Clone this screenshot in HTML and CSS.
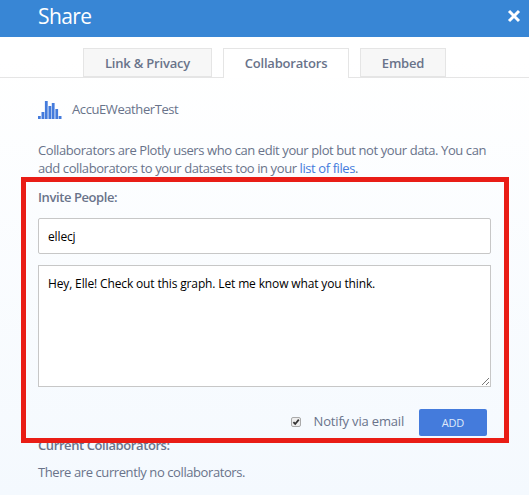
FILE: index.html
```
<!DOCTYPE html>
<html lang="en">
<head>
<meta charset="utf-8">
<title>Share</title>
<link rel="stylesheet" href="styles.css">
</head>
<body>
<header class="header">
  <h1 class="title">Share</h1>
  <button class="close" aria-label="Close"><svg width="14" height="14" viewBox="0 0 14 14"><path d="M2 2L12 12M12 2L2 12"/></svg></button>
</header>
<nav class="tabs">
  <a class="tab tab-privacy">Link &amp; Privacy</a>
  <a class="tab tab-collab active">Collaborators</a>
  <a class="tab tab-embed">Embed</a>
</nav>
<main class="content">
  <div class="file">
    <svg class="chart" width="24" height="18" viewBox="0 0 24 18"><path d="M0 15h2.8v3H0zM3.5 11h2.8v7H3.5zM6.9 0h2.8v18H6.9zM10.4 5h2.8v13h-2.8zM13.8 2h2.8v16h-2.8zM17.3 8h2.8v10h-2.8zM20.7 15h2.8v3h-2.8z"/><path class="tint" d="M2.8 16h.7v2h-.7zM6.3 11h.6v7h-.6zM9.7 5h.7v13h-.7zM13.2 5h.6v13h-.6zM16.6 8h.7v10h-.7zM20.1 15h.6v3h-.6z"/></svg>
    <span class="file-name">AccuEWeatherTest</span>
  </div>
  <p class="intro">Collaborators are Plotly users who can edit your plot but not your data. You can<br>add collaborators to your datasets too in your <a class="link">list of files</a>.</p>
  <section class="invite">
    <h2 class="label">Invite People:</h2>
    <div class="input">ellecj</div>
    <div class="message">Hey, Elle! Check out this graph. Let me know what you think.<svg class="grip" width="9" height="9" viewBox="0 0 9 9"><path d="M1 8L8 1M5 8L8 5"/></svg></div>
    <div class="actions">
      <svg class="check" width="10" height="10" viewBox="0 0 10 10"><rect x=".5" y=".5" width="9" height="9" rx="1.5"/><path d="M2.4 5.2L4.2 7L7.8 2.7"/></svg>
      <span class="notify">Notify via email</span>
      <button class="add">ADD</button>
    </div>
  </section>
  <h2 class="label current">Current Collaborators:</h2>
  <p class="empty">There are currently no collaborators.</p>
</main>
<div class="highlight"></div>
</body>
</html>
```
FILE: styles.css
```
* { box-sizing: border-box; }
html { height: 100%; }
body {
  margin: 0;
  height: 495px;
  overflow: hidden;
  background: linear-gradient(#fff 60px, #f4f9fe);
  font: 13px/18px "Open Sans", sans-serif;
  letter-spacing: -.41px;
  color: #69738a;
}
h1, h2, p { margin: 0; }
button { border: 0; font-family: inherit; }
.header {
  display: flex;
  justify-content: space-between;
  height: 37px;
  padding: 0 8px 0 38px;
  background: #3886d5;
}
.title { font-size: 21px; line-height: 32px; font-weight: 400; letter-spacing: -.6px; color: #fff; }
.close { display: flex; width: 14px; height: 14px; margin-top: 9px; padding: 0; background: none; }
.close path { stroke: #fff; stroke-width: 3; }
.tabs {
  display: flex;
  gap: 11px;
  height: 41px;
  padding: 11px 0 0 83px;
  border-bottom: 1px solid #e5e5e5;
}
.tab {
  height: 29px;
  border: 1px solid #e5e5e5;
  background: #f7f7f7;
  font-weight: 600;
  letter-spacing: -.2px;
  line-height: 29px;
  text-align: center;
  white-space: nowrap;
}
.tab-privacy { width: 129px; }
.tab-collab { width: 126px; }
.tab-embed { width: 86px; }
.active { height: 30px; border-bottom: 0; background: #fff; }
.content { padding: 23px 38px 0; }
.file { display: flex; height: 18px; }
.chart { flex: none; fill: #447bdc; }
.tint { fill: #a5c0ef; }
.file-name { margin-left: 10px; line-height: 17px; }
.intro { margin-top: 22px; white-space: nowrap; }
.link { color: #447bdc; }
.invite { margin-top: 11px; }
.label { font-size: 13px; line-height: 18px; font-weight: 600; }
.input, .message {
  border: 1px solid #c7c7c7;
  background: #fff;
  padding: 0 9px;
  color: #000;
  font-size: 12px;
  letter-spacing: -.14px;
}
.input { height: 36px; margin-top: 12px; border-radius: 2px; line-height: 36px; }
.message { position: relative; height: 122px; margin-top: 11px; padding-top: 9px; }
.grip { position: absolute; right: 0; bottom: 0; }
.grip path { stroke: #555; fill: none; stroke-width: .8; }
.actions { display: flex; align-items: center; justify-content: flex-end; height: 27px; margin-top: 22px; padding-right: 4px; }
.check { margin-bottom: 2px; }
.check rect { fill: #eee; stroke: #aaa; }
.check path { fill: none; stroke: #333; stroke-width: 1.8; }
.notify { margin: -3px 15px 0 13px; letter-spacing: -.18px; }
.add { width: 68px; height: 27px; border-radius: 2px; padding: 0 0 1px; background: #447bdc; color: #dfe9fa; font-size: 11px; letter-spacing: -.2px; }
.current { margin-top: 0; }
.empty { margin-top: 9px; }
.highlight { position: absolute; left: 21px; top: 177px; width: 488px; height: 266px; border: 5px solid #e91d16; }
```
